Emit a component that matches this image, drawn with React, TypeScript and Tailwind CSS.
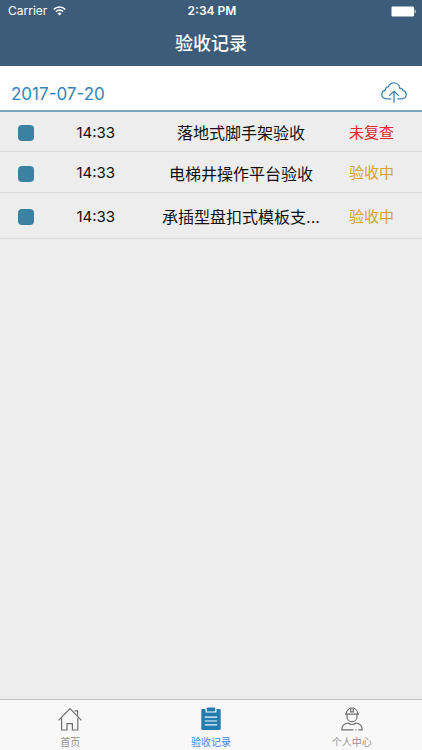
type Tab = 'home' | 'records' | 'profile';

interface InspectionRecord {
  id: number;
  time: string;
  name: string;
  status: string;
  statusColor: string;
  height: string;
}

const records: InspectionRecord[] = [
  { id: 1, time: '14:33', name: '落地式脚手架验收', status: '未复查', statusColor: 'text-[#e0292b]', height: 'h-10' },
  { id: 2, time: '14:33', name: '电梯井操作平台验收', status: '验收中', statusColor: 'text-[#dca032]', height: 'h-[41px]' },
  { id: 3, time: '14:33', name: '承插型盘扣式模板支...', status: '验收中', statusColor: 'text-[#dca032]', height: 'h-[46px]' },
];

const tabs: { id: Tab; label: string; Icon: () => React.JSX.Element }[] = [
  { id: 'home', label: '首页', Icon: HomeIcon },
  { id: 'records', label: '验收记录', Icon: ClipboardIcon },
  { id: 'profile', label: '个人中心', Icon: WorkerIcon },
];

function WifiIcon() {
  return (
    <svg width="13" height="10" viewBox="0 0 13 10" fill="none" stroke="white" strokeWidth="1.6">
      <path d="M0.8 3.4a8.1 8.1 0 0 1 11.4 0" />
      <path d="M2.9 5.6a5.1 5.1 0 0 1 7.2 0" />
      <path d="M6.5 9.6 4.5 7.4a2.9 2.9 0 0 1 4 0z" fill="white" stroke="none" />
    </svg>
  );
}

function BatteryIcon() {
  return (
    <svg width="25" height="11" viewBox="0 0 25 11">
      <rect x="0.5" y="0.5" width="22.5" height="10" rx="1.2" fill="white" />
      <path d="M23.600 3.500c1.400.4 1.400 3.600 0 4z" fill="white" />
    </svg>
  );
}

function CloudUploadIcon() {
  return (
    <svg width="26" height="21" viewBox="0 0 26 21" fill="none" stroke="#3d86b4" strokeWidth="1.3" strokeLinecap="round" strokeLinejoin="round">
      <path d="M10 16.8H5.4C2.7 16.8.8 15 .8 12.6c0-2.2 1.500-3.800 3.400-4.200-.2-2 1.300-3.500 3.200-3.500C8.200 2.300 10.200.8 12.700.8c3.300 0 5.800 2.400 6.200 5.600 1.700-.2 2.900.8 3.200 2.300 1.800.4 3.100 1.900 3.100 3.900 0 2.400-1.800 4.200-4.200 4.200h-4.200" />
      <path d="M13 20.2V9.600M8.600 13.400 13 9.200l4.400 4.200" />
    </svg>
  );
}

function HomeIcon() {
  return (
    <svg width="24" height="24" viewBox="0 0 24 24" fill="none" stroke="#6e6e6e" strokeWidth="1.2">
      <path d="M.6 13.300 12 1.600l11.400 11.700" />
      <path d="M3.600 11v12h5.400v-6.400h5.400V23h5.400V11" />
      <path d="M16.600 3.800h3v4.800" />
    </svg>
  );
}

function ClipboardIcon() {
  return (
    <svg width="24" height="24" viewBox="0 0 24 24">
      <path d="M3.500 2h3v3.600h11V2h3a1.200 1.200 0 0 1 1.200 1.200v18.600a1.200 1.200 0 0 1-1.200 1.200h-17a1.200 1.200 0 0 1-1.200-1.200V3.200A1.200 1.200 0 0 1 3.500 2z" fill="#247bb0" />
      <rect x="7.800" y="0.500" width="8.400" height="4" rx="0.800" fill="#247bb0" />
      <path d="M5.800 10.200h12.400M5.800 14h12.400M5.800 17.800h12.400" stroke="#f7f7f7" strokeWidth="1.200" />
    </svg>
  );
}

function WorkerIcon() {
  return (
    <svg width="24" height="24" viewBox="0 0 24 24" fill="none" stroke="#6e6e6e" strokeWidth="1.2" strokeLinecap="round">
      <path d="M6.400 6.800C6.400 3.200 8.800 1 12 1s5.600 2.200 5.600 5.800" />
      <path d="M5.400 7.200h13.200M10.700 1.200v3.600h2.600V1.200" />
      <path d="M7 7.800v1.600c0 3 2.200 5.300 5 5.300s5-2.300 5-5.300V7.800" />
      <path d="M13 22.800H1.800c0-4 2.200-6.300 6.200-6.800 1.200 1 2.500 1.500 4 1.500s2.800-.5 4-1.500c4 .5 6.200 2.800 6.200 6.800h-3.400M15.800 22.800h.3" />
    </svg>
  );
}

function StatusBar() {
  return (
    <div className="grid h-[22px] grid-cols-[1fr_auto_1fr] items-center pr-[6px] pl-2 text-xs text-white">
      <div className="flex items-center gap-[6px]">
        <span>Carrier</span>
        <WifiIcon />
      </div>
      <span className="text-center font-semibold">2:34 PM</span>
      <div className="flex justify-end">
        <BatteryIcon />
      </div>
    </div>
  );
}

function RecordRow({ record }: { record: InspectionRecord }) {
  return (
    <li className={`grid grid-cols-[12%_21%_48%_14%] items-center border-b border-[#dadadc] pt-[3px] pl-px ${record.height}`}>
      <span className="ml-[17px] size-4 rounded bg-[#3a82a2]" />
      <span className="text-center text-[15px] text-[#111]">{record.time}</span>
      <span className="truncate text-center text-base text-[#111]">{record.name}</span>
      <span className={`text-center text-[15px] whitespace-nowrap ${record.statusColor}`}>{record.status}</span>
    </li>
  );
}

export default function App() {
  const activeTab: Tab = 'records';

  return (
    <div className="flex min-h-screen flex-col bg-[#ededed] font-['Inter','Noto_Sans_CJK_SC',sans-serif]">
      <header className="bg-[#3c5c79]">
        <StatusBar />
        <h1 className="flex h-11 items-center justify-center pb-[2px] text-[18px] font-medium text-white">验收记录</h1>
      </header>

      <main className="flex-1">
        <div className="flex h-[46px] items-center justify-between border-b-2 border-[#7ba5bf] bg-white pt-[9px] pr-[15px] pl-[11px]">
          <h2 className="pt-1 text-[17px] text-[#3585bb]">2017-07-20</h2>
          <button type="button" aria-label="上传" className="cursor-pointer">
            <CloudUploadIcon />
          </button>
        </div>
        <ul>
          {records.map((record) => (
            <RecordRow key={record.id} record={record} />
          ))}
        </ul>
      </main>

      <nav className="grid h-[51px] grid-cols-3 border-t border-[#c0c0c0] bg-[#f8f8f8]">
        {tabs.map(({ id, label, Icon }) => (
          <button
            key={id}
            type="button"
            className={`flex cursor-pointer flex-col items-center gap-1 pt-[7px] text-[10px] leading-[14px] ${
              id === activeTab ? 'text-[#3b86e8]' : 'text-[#929292]'
            }`}
          >
            <Icon />
            {label}
          </button>
        ))}
      </nav>
    </div>
  );
}
